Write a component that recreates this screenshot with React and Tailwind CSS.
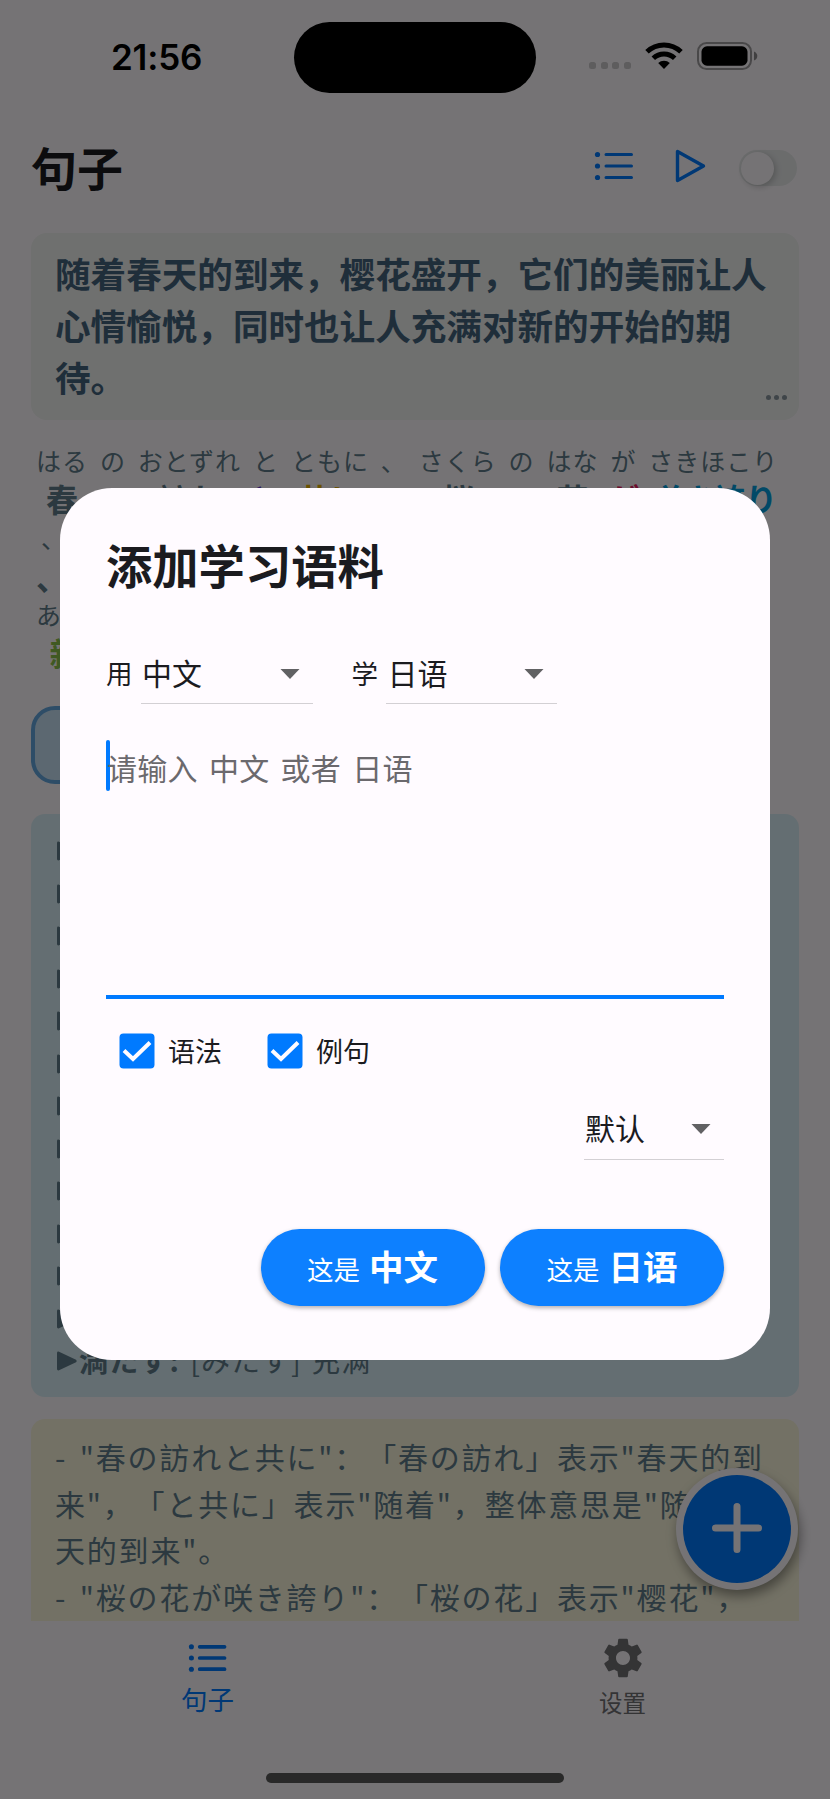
import { useState } from "react";

const words = [
  { kana: "はる", text: "春", color: "text-[#607d8b]" },
  { kana: "の", text: "の", color: "text-[#607d8b]" },
  { kana: "おとずれ", text: "訪れ", color: "text-[#607d8b]" },
  { kana: "と", text: "と", color: "text-[#673ad8]" },
  { kana: "ともに", text: "共に", color: "text-[#e8b000]" },
  { kana: "、", text: "、", color: "text-[#607d8b]" },
  { kana: "さくら", text: "桜", color: "text-[#607d8b]" },
  { kana: "の", text: "の", color: "text-[#607d8b]" },
  { kana: "はな", text: "花", color: "text-[#607d8b]" },
  { kana: "が", text: "が", color: "text-[#e91e63]" },
  { kana: "さきほこり", text: "咲き誇り", color: "text-[#03a0e0]" },
];

// rows of the vocabulary list above the last one
const vocab = ["", "", "", "", "", "", "", "", "", "", "", ""];

function ListIcon({ className, stroke = 3 }) {
  return (
    <svg viewBox="0 0 40 30" className={className} fill="none" stroke="#007aff" strokeWidth={stroke} strokeLinecap="round">
      <path d="M12 3.5H37.5M12 15H37.5M12 26.5H37.5" />
      <g fill="#007aff" stroke="none">
        <circle cx="3.5" cy="3.5" r="2.6" />
        <circle cx="3.5" cy="15" r="2.6" />
        <circle cx="3.5" cy="26.5" r="2.6" />
      </g>
    </svg>
  );
}

function StatusBar() {
  return (
    <div className="h-[112px] shrink-0 flex items-start pl-[111px] pr-[72px]">
      <div className="w-[183px] pt-[37px] font-['Inter'] font-semibold text-[35px] leading-[41px] tracking-[-0.2px] text-black">21:56</div>
      <div className="mt-[22px] w-[242px] h-[71px] rounded-full bg-black" />
      <div className="flex-1 flex justify-end pt-[42px]">
        <div className="flex gap-[4.6px] pt-[20px] mr-[14px]">
          <span className="size-[7px] rounded-[2.5px] bg-[#cdcacd]" />
          <span className="size-[7px] rounded-[2.5px] bg-[#cdcacd]" />
          <span className="size-[7px] rounded-[2.5px] bg-[#cdcacd]" />
          <span className="size-[7px] rounded-[2.5px] bg-[#cdcacd]" />
        </div>
        <svg viewBox="0 0 38 28" className="w-[38px] h-[28px] mr-[14px]" fill="none" stroke="black" strokeWidth="5">
          <path d="M2 9.8A24.5 24.5 0 0 1 36 9.8" />
          <path d="M8.3 16.3A15.5 15.5 0 0 1 29.7 16.3" />
          <path d="M19 27L13.2 21A8.5 8.5 0 0 1 24.8 21Z" fill="black" stroke="none" />
        </svg>
        <svg viewBox="0 0 61 28" className="w-[61px] h-[28px]">
          <rect x="1" y="1" width="53" height="26" rx="8.5" fill="none" stroke="#a09da0" strokeWidth="2" />
          <rect x="4.5" y="4.3" width="46" height="19.4" rx="5.5" fill="black" />
          <path d="M57 9.5Q60.3 11 60.3 14T57 18.5Z" fill="#8f8c8f" />
        </svg>
      </div>
    </div>
  );
}

function Header() {
  return (
    <div className="h-[121px] shrink-0 flex items-start pl-[31px] pr-[33px] pt-[29px]">
      <h1 className="flex-1 text-[46px] leading-[50px] font-bold text-[#1b1b1f]">句子</h1>
      <ListIcon className="w-[40px] h-[30px] mt-[10px] mr-[40px]" />
      <svg viewBox="0 0 32 36" className="w-[32px] h-[36px] mt-[7px] mr-[33px]" fill="none" stroke="#007aff" strokeWidth="3.4" strokeLinejoin="round">
        <path d="M3.5 3.5V32.5L29.5 18Z" />
      </svg>
      <div className="w-[58px] h-[36px] mt-[9px] rounded-full bg-[#e9ebec] p-[1.5px]">
        <div className="size-[33px] rounded-full bg-[#fffbff] shadow-[2px_2px_6px_rgba(0,0,0,0.2)]" />
      </div>
    </div>
  );
}

function Furigana() {
  return (
    <div className="pl-[36px] pt-[22px] h-[286px]">
      <div className="flex gap-[8.9px]">
        {words.map((w, i) => (
          <div key={i} className="flex flex-col items-center whitespace-nowrap">
            <span className="text-[25px] leading-[36px] tracking-[1px] text-[#607d8b]">{w.kana}</span>
            <span className={`text-[32px] leading-[41px] font-bold ${w.color}`}>{w.text}</span>
          </div>
        ))}
      </div>
      <div className="flex flex-col items-start">
        <span className="text-[25px] leading-[37px] text-[#607d8b] pl-[5px]">、</span>
        <span className="text-[32px] leading-[41px] font-bold text-[#607d8b]">、</span>
      </div>
      <div className="inline-flex flex-col items-center whitespace-nowrap">
        <span className="text-[25px] leading-[34px] tracking-[1px] text-[#607d8b]">あたらしい</span>
        <span className="-ml-[7px] text-[32px] leading-[42px] font-bold text-[#8bc34a]">新しい</span>
      </div>
    </div>
  );
}

function Triangle() {
  return (
    <svg viewBox="0 0 20 20" className="w-[20px] h-[20px] shrink-0" fill="#607d8b">
      <path d="M1.5 .6L19 8.7Q20.3 10 19 11.3L1.5 19.4Q0 19.5 0 18V2Q0 .5 1.5 .6Z" />
    </svg>
  );
}

function Content() {
  return (
    <div className="h-[1388px] shrink-0 overflow-hidden px-[31px]">
      <div className="relative h-[187px] rounded-[16px] bg-[#f1f3f1] pl-[24px] pt-[14px]">
        <p className="w-[725px] text-[35.6px] leading-[52px] font-bold text-[#45657f] [text-spacing-trim:space-all]">
          随着春天的到来，樱花盛开，它们的美丽让人<br />
          心情愉悦，同时也让人充满对新的开始的期<br />
          待。
        </p>
        <div className="absolute right-[12px] bottom-[20px] flex gap-[2.3px]">
          <span className="size-[5.5px] rounded-full bg-[#8a979f]" />
          <span className="size-[5.5px] rounded-full bg-[#8a979f]" />
          <span className="size-[5.5px] rounded-full bg-[#8a979f]" />
        </div>
      </div>

      <div className="-mx-[31px]"><Furigana /></div>

      <div className="w-[300px] h-[78px] rounded-[24px] border-4 border-[#64a8e0] bg-[#c8e2f6]" />

      <div className="mt-[30px] h-[583px] rounded-[14px] bg-[#dbf0f8] pl-[26px] pt-[16px]">
        {vocab.map((v, i) => (
          <div key={i} className="h-[42.5px] flex items-center"><Triangle /></div>
        ))}
        <div className="h-[42.5px] flex items-center text-[29px] text-[#607d8b] whitespace-pre">
          <Triangle />
          <b className="pl-[2px] -mt-[3px] tracking-[1.2px]">満たす:</b>
          <span className="pl-[10px] -mt-[3px] tracking-[1px] [word-spacing:2px]">[みたす] 充满</span>
        </div>
      </div>

      <div className="mt-[22px] h-[300px] rounded-[14px] bg-[#faf6dc] pl-[24px] pt-[14px] text-[30px] leading-[46.6px] tracking-[1.8px] [word-spacing:4px] [text-spacing-trim:space-all] text-[#607d8b] whitespace-nowrap">
        <p>- "春の訪れと共に"：「春の訪れ」表示"春天的到</p>
        <p>来"，「と共に」表示"随着"，整体意思是"随着春</p>
        <p>天的到来"。</p>
        <p>- "桜の花が咲き誇り"：「桜の花」表示"樱花"，</p>
      </div>
    </div>
  );
}

function TabBar() {
  return (
    <div className="flex-1 bg-[#fffbff] flex flex-col items-center">
      <div className="w-full flex h-[152px]">
        <div className="flex-1 flex flex-col items-center pt-[22px]">
          <ListIcon className="w-[39px] h-[30px]" stroke={3.8} />
          <span className="mt-[7px] text-[26.5px] leading-[38px] text-[#007aff]">句子</span>
        </div>
        <div className="flex-1 flex flex-col items-center pt-[13px]">
          <svg viewBox="0 0 24 24" className="size-[48px]" fill="#717175">
            <path d="M19.14 12.94c.04-.3.06-.61.06-.94 0-.32-.02-.64-.07-.94l2.03-1.58a.49.49 0 0 0 .12-.61l-1.92-3.32a.488.488 0 0 0-.59-.22l-2.39.96c-.5-.38-1.03-.7-1.62-.94l-.36-2.54a.484.484 0 0 0-.48-.41h-3.84c-.24 0-.43.17-.47.41l-.36 2.54c-.59.24-1.13.57-1.62.94l-2.39-.96c-.22-.08-.47 0-.59.22L2.74 8.87c-.12.21-.08.47.12.61l2.03 1.58c-.05.3-.09.63-.09.94s.02.64.07.94l-2.03 1.58a.49.49 0 0 0-.12.61l1.92 3.32c.12.22.37.29.59.22l2.39-.96c.5.38 1.03.7 1.62.94l.36 2.54c.05.24.24.41.48.41h3.84c.24 0 .44-.17.47-.41l.36-2.54c.59-.24 1.13-.56 1.62-.94l2.39.96c.22.08.47 0 .59-.22l1.92-3.32c.12-.22.07-.47-.12-.61l-2.01-1.58zM12 15.5c-1.93 0-3.5-1.57-3.5-3.5s1.57-3.5 3.5-3.5 3.5 1.57 3.5 3.5-1.57 3.5-3.5 3.5z" />
          </svg>
          <span className="mt-[3px] text-[23.5px] leading-[34px] text-[#717175]">设置</span>
        </div>
      </div>
      <div className="w-[298px] h-[10px] rounded-full bg-[#5b5b5b]" />
    </div>
  );
}

function Select({ value, className }) {
  return (
    <div className={`flex items-center justify-between border-b-[1.5px] border-[#d3d0d4] ${className}`}>
      <span>{value}</span>
      <svg viewBox="0 0 20 10" className="w-[20px] h-[10px] mt-[3px]" fill="#616163"><path d="M.5 0H19.5L10 10Z" /></svg>
    </div>
  );
}

function Check({ label, checked, onChange }) {
  return (
    <label className="flex items-center w-[148px]">
      <input type="checkbox" className="sr-only" checked={checked} onChange={onChange} />
      <svg viewBox="0 0 36 36" className="size-[36px]">
        <rect x=".5" y=".5" width="35" height="35" rx="4" fill={checked ? "#007aff" : "#cccccc"} />
        <path d="M5 17.5L14 26L31 9.5" fill="none" stroke="#fffbff" strokeWidth="4" />
      </svg>
      <span className="pl-[13px] text-[27px] leading-[36px]">{label}</span>
    </label>
  );
}

function SubmitButton({ lang }) {
  return (
    <button className="w-[224px] h-[77px] pb-[4px] rounded-full bg-[#0d80ff] text-white flex items-baseline justify-center shadow-[0_2px_4px_rgba(0,0,0,0.3)]">
      <span className="text-[26.5px] leading-[73px]">这是</span>
      <b className="pl-[9px] text-[34.5px] leading-[73px]">{lang}</b>
    </button>
  );
}

function AddDialog() {
  const [grammar, setGrammar] = useState(true);
  const [examples, setExamples] = useState(true);

  return (
    <div className="absolute left-[60px] top-[488px] w-[710px] h-[872px] rounded-[52px] bg-[#fffbff] px-[46px] text-[#1b1b1f]">
      <h2 className="pt-[49px] text-[46.3px] leading-[54px] font-bold">添加学习语料</h2>

      <div className="mt-[52px] flex h-[61px] text-[30px]">
        <span className="text-[26.5px] leading-[60px] w-[35px]">用</span>
        <Select value="中文" className="w-[171.5px] pl-px pr-[13px] pb-[1px]" />
        <span className="ml-[39px] text-[26.5px] leading-[60px] w-[34px]">学</span>
        <Select value="日语" className="w-[171.5px] pl-[2px] pr-[13px] pb-[1px]" />
      </div>

      <div className="mt-[36px] h-[259px] flex items-start border-b-4 border-[#007aff]">
        <span className="w-[4px] h-[51px] rounded-full bg-[#007aff]" />
        <span className="-ml-[3px] mt-[2px] text-[30px] leading-[50px] tracking-[0.3px] [word-spacing:4px] text-[#6b696d] whitespace-pre">请输入 中文 或者 日语</span>
      </div>

      <div className="mt-[34px] pl-[13px] flex">
        <Check label="语法" checked={grammar} onChange={() => setGrammar(!grammar)} />
        <Check label="例句" checked={examples} onChange={() => setExamples(!examples)} />
      </div>

      <div className="mt-[30px] h-[61px] flex justify-end text-[30px]">
        <Select value="默认" className="w-[140px] pl-px pr-[13px] pb-[3px]" />
      </div>

      <div className="mt-[69px] flex justify-end gap-[15.5px]">
        <SubmitButton lang="中文" />
        <SubmitButton lang="日语" />
      </div>
    </div>
  );
}

export default function App() {
  return (
    <div className="relative w-[830px] h-[1799px] overflow-hidden flex flex-col bg-[#fffbff] font-['Noto_Sans_CJK_SC','Noto_Sans_CJK_JP',sans-serif]">
      <StatusBar />
      <Header />
      <Content />
      <TabBar />

      {/* floating add button */}
      <div className="absolute left-[676px] top-[1468px] size-[122px] rounded-full bg-[#fffbff] p-[7px] shadow-[2px_6px_12px_rgba(0,0,0,0.4)]">
        <div className="size-full rounded-full bg-[#007aff] flex items-center justify-center">
          <svg viewBox="0 0 50 50" className="size-[50px] -mt-[2px]" stroke="#fffbff" strokeWidth="7" strokeLinecap="round">
            <path d="M25 3.5V46.5M3.5 25H46.5" />
          </svg>
        </div>
      </div>

      <div className="absolute inset-0 bg-black/54" />
      <AddDialog />
    </div>
  );
}
